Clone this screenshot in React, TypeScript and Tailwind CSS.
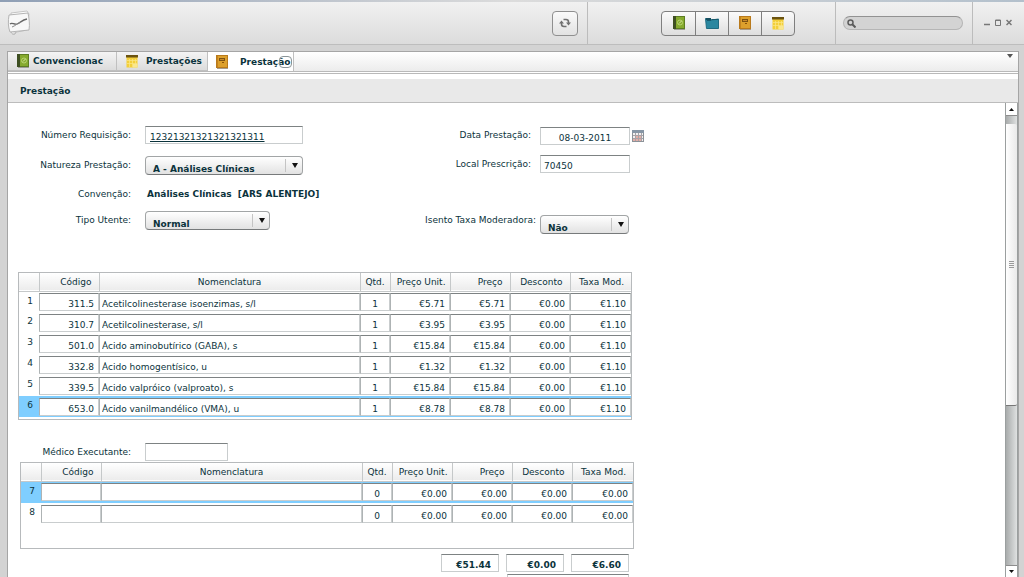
import { useState } from "react"

type Line = {
    n: number
    code: string
    name: string
    qty: string
    unit: string
    price: string
    discount: string
    fee: string
}

const prescribed: Line[] = [
    { n: 1, code: "311.5", name: "Acetilcolinesterase isoenzimas, s/l", qty: "1", unit: "€5.71", price: "€5.71", discount: "€0.00", fee: "€1.10" },
    { n: 2, code: "310.7", name: "Acetilcolinesterase, s/l", qty: "1", unit: "€3.95", price: "€3.95", discount: "€0.00", fee: "€1.10" },
    { n: 3, code: "501.0", name: "Ácido aminobutírico (GABA), s", qty: "1", unit: "€15.84", price: "€15.84", discount: "€0.00", fee: "€1.10" },
    { n: 4, code: "332.8", name: "Ácido homogentísico, u", qty: "1", unit: "€1.32", price: "€1.32", discount: "€0.00", fee: "€1.10" },
    { n: 5, code: "339.5", name: "Ácido valpróico (valproato), s", qty: "1", unit: "€15.84", price: "€15.84", discount: "€0.00", fee: "€1.10" },
    { n: 6, code: "653.0", name: "Ácido vanilmandélico (VMA), u", qty: "1", unit: "€8.78", price: "€8.78", discount: "€0.00", fee: "€1.10" },
]

const extra: Line[] = [
    { n: 7, code: "", name: "", qty: "0", unit: "€0.00", price: "€0.00", discount: "€0.00", fee: "€0.00" },
    { n: 8, code: "", name: "", qty: "0", unit: "€0.00", price: "€0.00", discount: "€0.00", fee: "€0.00" },
]

const field = "block h-[18px] border border-[#c9cdce] border-t-[#7d8283] bg-white pt-1 text-[9px] leading-3 outline-none"

function BookIcon() {
    return (
        <svg width="12" height="14" viewBox="0 0 12 14">
            <rect x="0.5" y="0.5" width="11" height="12" fill="#86aa2e" stroke="#5d7d22" />
            <rect x="0" y="0" width="3" height="13" fill="#3e4f22" />
            <circle cx="7" cy="6.5" r="2.500" fill="none" stroke="#b9d470" />
            <path d="M6 7.5 8.5 5" stroke="#d9eaa5" />
            <path d="M1 13.5h11" stroke="#9d9d95" />
        </svg>
    )
}

function FolderIcon() {
    return (
        <svg width="14" height="12" viewBox="0 0 14 12">
            <path d="M0.5 1.5h5l1 1.5 7-1v9.500h-12z" fill="#2a87a0" stroke="#1f6c82" />
            <path d="M1 1h5v2H1z" fill="#164f60" />
            <path d="M2 3.500h4l1-1h6" fill="none" stroke="#175a6d" />
        </svg>
    )
}

function CardIcon() {
    return (
        <svg width="12" height="14" viewBox="0 0 12 14">
            <rect x="0.5" y="0.5" width="11" height="12" fill="#dda02c" stroke="#b97a1c" />
            <path d="M1.500 1v11" stroke="#c4841f" />
            <rect x="3" y="3" width="6" height="3" fill="#7d5212" />
            <path d="M4 4.500h4" stroke="#c98a2c" />
            <rect x="6" y="7" width="2" height="1" fill="#8a5208" />
            <path d="M1 13.5h11" stroke="#a79c8b" />
        </svg>
    )
}

function CalendarIcon() {
    return (
        <svg width="12" height="13" viewBox="0 0 12 13">
            <rect x="0.500" y="1" width="11" height="11.500" fill="#f3cf3a" />
            <rect x="0" y="0" width="12" height="2.500" fill="#6b5310" />
            <path d="M1 5.500h10M1 8.500h10M3.500 4v8M6.500 4v8M9.500 4v8" stroke="#fbe68a" strokeWidth="0.700" />
            <rect x="7" y="9" width="4.500" height="3.500" fill="#fae78e" />
        </svg>
    )
}

function DateIcon() {
    return (
        <svg width="12" height="12" viewBox="0 0 12 12">
            <rect x="0.500" y="0.500" width="11" height="11" fill="#f2f0f0" stroke="#8c9298" />
            <rect x="0" y="0" width="12" height="3" fill="#8796a5" />
            <path d="M1 5.500h10M1 8.500h10M3.500 3v8M6.500 3v8M9.500 3v8" stroke="#a8a4a8" />
            <path d="M4 7h2M7 7h2M1 10h2M4 10h2M7 10h2" stroke="#d66a5c" />
        </svg>
    )
}

function AppLogo() {
    return (
        <svg width="26" height="26" viewBox="0 0 26 26">
            <path d="M4 3 20 1l2 3-2 16-15 3z" fill="#fdfdfd" stroke="#c4c4c4" />
            <path d="M2 5 21 3c1 5 2 11 1 17L3 22C1 17 1 11 2 5z" fill="#f8f8f8" stroke="#b4b4b4" />
            <path d="M4 22c1 2 2 3 4 2l1-2" fill="#ddd" stroke="#b4b4b4" />
            <path d="M3 14c2-2 4 1 7 0s5-4 10-5" fill="none" stroke="#666" strokeWidth="1.300" />
            <path d="M5 17c3-1 6-4 9-5" fill="none" stroke="#888" />
        </svg>
    )
}

function RefreshIcon() {
    return (
        <svg width="12" height="10" viewBox="0 0 12 10" fill="none" stroke="#707070" strokeWidth="1.600">
            <path d="M4.500 1.500h2.500a2.500 2.500 0 0 1 2.500 2.500v1" />
            <path d="M7.500 8.500H5a2.500 2.500 0 0 1-2.500-2.500V5" />
            <path d="M7 4.500h5L9.500 7.500zM0 5.500h5L2.500 2.500z" fill="#707070" stroke="none" />
        </svg>
    )
}

function Dropdown({ id, options, width }: { id: string; options: string[]; width: string }) {
    return (
        <div className={`relative ${width}`}>
            <select
                id={id}
                className="block h-[19px] w-full appearance-none rounded-[4px] border border-[#a2a5a6] border-b-[#777a7b] bg-linear-to-b from-white to-[#e2e2e2] pt-[6px] pr-6 pl-[7px] text-[9px] leading-3 font-bold outline-none"
            >
                {options.map((o) => (
                    <option key={o}>{o}</option>
                ))}
            </select>
            <span className="pointer-events-none absolute inset-y-[3px] right-0 flex w-[18px] items-center justify-center border-l border-[#c4c4c4]">
                <svg width="6" height="5" viewBox="0 0 6 5">
                    <path d="M0 0h6L3 5z" fill="#111" />
                </svg>
            </span>
        </div>
    )
}

function LinesTable({ label, rows, selected, rowHeight, bottom }: { label: string; rows: Line[]; selected: number; rowHeight: string; bottom: string }) {
    const cell = "block h-[18px] w-full border border-[#c9cdce] border-t-[#7d8283] border-l-[#aeb3b4] bg-white pt-1 text-[9px] leading-3 outline-none"
    return (
        <div className={`w-[614px] border border-[#b7babc] bg-white ${bottom}`}>
            <table aria-label={label} className="w-full table-fixed border-collapse text-[9px] leading-3">
                <colgroup>
                    <col className="w-[20px]" />
                    <col className="w-[60px]" />
                    <col className="w-[261px]" />
                    <col className="w-[30px]" />
                    <col className="w-[60px]" />
                    <col className="w-[60px]" />
                    <col className="w-[60px]" />
                    <col />
                </colgroup>
                <thead>
                    <tr className="h-[18px] border-b border-[#c5c8c9] bg-linear-to-b from-white to-[#ececec]">
                        <th className="p-0" />
                        <th className="border-l border-[#c5c8c9] p-0 pr-[7px] text-right font-normal">Código</th>
                        <th className="border-l border-[#c5c8c9] p-0 text-center font-normal">Nomenclatura</th>
                        <th className="border-l border-[#c5c8c9] p-0 text-center font-normal">Qtd.</th>
                        <th className="border-l border-[#c5c8c9] p-0 pr-1 text-right font-normal whitespace-nowrap">Preço Unit.</th>
                        <th className="border-l border-[#c5c8c9] p-0 pr-[7px] text-right font-normal">Preço</th>
                        <th className="border-l border-[#c5c8c9] p-0 pr-[7px] text-right font-normal">Desconto</th>
                        <th className="border-l border-[#c5c8c9] p-0 pr-[7px] text-right font-normal whitespace-nowrap">Taxa Mod.</th>
                    </tr>
                </thead>
                <tbody>
                    {rows.map((r) => (
                        <tr key={r.n} className={`${rowHeight} ${r.n === selected ? "bg-[#7fceff]" : ""}`}>
                            <td className="p-0 pt-[3px] pr-[6px] text-right align-top">{r.n}</td>
                            <td className="p-0"><input aria-label={`Código ${r.n}`} defaultValue={r.code} className={`${cell} pr-1 text-right`} /></td>
                            <td className="p-0"><input aria-label={`Nomenclatura ${r.n}`} defaultValue={r.name} className={`${cell} pl-[2px]`} /></td>
                            <td className="p-0"><input aria-label={`Qtd. ${r.n}`} defaultValue={r.qty} className={`${cell} text-center`} /></td>
                            <td className="p-0"><input aria-label={`Preço Unit. ${r.n}`} defaultValue={r.unit} className={`${cell} pr-1 text-right`} /></td>
                            <td className="p-0"><input aria-label={`Preço ${r.n}`} defaultValue={r.price} className={`${cell} pr-1 text-right`} /></td>
                            <td className="p-0"><input aria-label={`Desconto ${r.n}`} defaultValue={r.discount} className={`${cell} pr-1 text-right`} /></td>
                            <td className="p-0"><input aria-label={`Taxa Mod. ${r.n}`} defaultValue={r.fee} className={`${cell} pr-1 text-right`} /></td>
                        </tr>
                    ))}
                </tbody>
            </table>
        </div>
    )
}

function Header() {
    const tool = "flex h-full w-[33px] items-center justify-center border-l border-[#7f7f7f] first:border-l-0"
    return (
        <header className="flex h-[43px] shrink-0 border-b border-[#bdbdbd] bg-linear-to-b from-[#f1f1f1] to-[#dcdcdc]">
            <div className="flex flex-1 items-center justify-between border-r border-[#bcbcbc] pr-[9px] pl-[7px]">
                <AppLogo />
                <button aria-label="Atualizar" className="flex h-[25px] w-[26px] items-center justify-center rounded-[4px] border border-[#8f8f8f] bg-linear-to-b from-[#fafafa] to-[#e2e2e2]">
                    <RefreshIcon />
                </button>
            </div>
            <div className="flex w-[248px] items-center justify-end border-r border-[#bcbcbc] pr-10">
                <div className="flex h-[25px] overflow-hidden rounded-[4px] border border-[#7f7f7f] bg-linear-to-b from-[#fbfbfb] to-[#dedede]">
                    <button aria-label="Convenções" className={tool}><BookIcon /></button>
                    <button aria-label="Pastas" className={tool}><FolderIcon /></button>
                    <button aria-label="Prestação" className={tool}><CardIcon /></button>
                    <button aria-label="Prestações" className={tool}><CalendarIcon /></button>
                </div>
            </div>
            <div className="flex w-[137px] items-center border-r border-[#bcbcbc] pr-[9px] pl-[7px]">
                <div className="flex h-[14px] w-full items-center rounded-full border border-[#b5b5b5] border-t-[#929292] bg-[#d3d3d3] pl-[3px]">
                    <svg width="9" height="9" viewBox="0 0 9 9" fill="none" stroke="#5c5c5c">
                        <circle cx="3.500" cy="3.500" r="2.500" strokeWidth="1.500" />
                        <path d="m5.500 5.500 3 3" strokeWidth="2" />
                    </svg>
                    <input aria-label="Pesquisar" className="min-w-0 flex-1 bg-transparent px-1 text-[9px] leading-3 outline-none" />
                </div>
            </div>
            <div className="flex w-[51px] items-center gap-[5px] pb-[2px] pl-[11px]">
                <button aria-label="Minimizar">
                    <svg width="6" height="7" viewBox="0 0 6 7"><path d="M0 5.500h6" stroke="#777" strokeWidth="1.500" /></svg>
                </button>
                <button aria-label="Maximizar">
                    <svg width="6" height="7" viewBox="0 0 6 7"><path d="M.5 1h5v5.500h-5zM0 1.500h6" fill="none" stroke="#777" /></svg>
                </button>
                <button aria-label="Fechar">
                    <svg width="6" height="7" viewBox="0 0 6 7"><path d="m.5 1 5 5M5.500 1l-5 5" stroke="#777" strokeWidth="1.500" /></svg>
                </button>
            </div>
        </header>
    )
}

function Tabs() {
    const [active, setActive] = useState(2)
    const on = "bg-white"
    const off = "border-b border-[#b5b5b5] bg-linear-to-b from-[#f4f4f4] to-[#dcdcdc]"
    return (
        <div className="flex h-[19px] shrink-0 bg-linear-to-b from-white to-[#ececec] text-[9px] font-bold">
            <div role="tablist" className="flex">
                <button role="tab" aria-selected={active === 0} onClick={() => setActive(0)} className={`flex w-[109px] items-center gap-1 border-r border-[#c0c0c0] pl-[9px] ${active === 0 ? on : off}`}>
                    <BookIcon />
                    Convencionac
                </button>
                <button role="tab" aria-selected={active === 1} onClick={() => setActive(1)} className={`flex w-[91px] items-center gap-2 border-r border-[#c0c0c0] pl-[9px] ${active === 1 ? on : off}`}>
                    <CalendarIcon />
                    Prestações
                </button>
                <div className={`relative flex w-[86px] border-r border-[#c0c0c0] ${active === 2 ? on : off}`}>
                    <button role="tab" aria-selected={active === 2} onClick={() => setActive(2)} className="flex items-center gap-3 pl-[8px]">
                        <CardIcon />
                        Prestação
                    </button>
                    <button aria-label="Fechar separador" className="absolute top-1 right-px h-3 w-[13px] rounded-[4px] border border-[#8a9497]" />
                </div>
            </div>
            <button aria-label="Lista de separadores" className="ml-auto self-start p-[5px] pt-[2px]">
                <svg width="6" height="4" viewBox="0 0 6 4"><path d="M0 0h6L3 4z" fill="#555" /></svg>
            </button>
        </div>
    )
}

function Scrollbar() {
    return (
        <div className="flex w-[13px] shrink-0 flex-col border-x border-[#9b9f9f] bg-linear-to-r from-[#a9acac] to-[#dfe1e1]">
            <button aria-label="Subir" className="flex h-[13px] items-center justify-center border-b border-[#8d8d8d] bg-white">
                <svg width="5" height="3" viewBox="0 0 5 3"><path d="M0 3h5L2.500 0z" fill="#111" /></svg>
            </button>
            <div className="flex-1 pt-2">
                <div className="flex h-[64%] items-center justify-center rounded-r-[2px] border-b border-[#777] bg-linear-to-r from-white to-[#eaeaea]">
                    <svg width="5" height="8" viewBox="0 0 5 8"><path d="M0 .5h5M0 2.500h5M0 4.500h5M0 6.500h5" stroke="#9a9a9a" /></svg>
                </div>
            </div>
            <button aria-label="Descer" className="flex h-[12px] items-center justify-center border-t border-[#8d8d8d] bg-white">
                <svg width="5" height="3" viewBox="0 0 5 3"><path d="M0 0h5L2.500 3z" fill="#111" /></svg>
            </button>
        </div>
    )
}

function RequestForm() {
    const label = "h-[18px] text-right leading-[18px] whitespace-nowrap"
    return (
        <form className="flex pt-[23px]">
            <div className="grid w-[380px] grid-cols-[123px_1fr] grid-rows-[30px_29px_26px_20px] items-start gap-x-[14px]">
                <label htmlFor="req" className={label}>Número Requisição:</label>
                <input id="req" defaultValue="12321321321321321311" className={`${field} w-[158px] pl-1 underline`} />
                <label htmlFor="nature" className={label}>Natureza Prestação:</label>
                <Dropdown id="nature" options={["A - Análises Clínicas"]} width="w-[158px]" />
                <span className={label}>Convenção:</span>
                <span className="h-[18px] pl-[2px] leading-[18px] font-bold whitespace-pre">Análises Clínicas  [ARS ALENTEJO]</span>
                <label htmlFor="user" className={label}>Tipo Utente:</label>
                <Dropdown id="user" options={["Normal"]} width="w-[125px]" />
            </div>
            <div className="grid grid-cols-[148px_1fr] grid-rows-[29px_56px_23px] items-start gap-x-1">
                <label htmlFor="date" className={`${label} pr-[5px]`}>Data Prestação:</label>
                <div className="flex items-center gap-[2px] pt-px">
                    <input id="date" defaultValue="08-03-2011" className={`${field} w-[90px] text-center`} />
                    <button type="button" aria-label="Escolher data"><DateIcon /></button>
                </div>
                <label htmlFor="place" className={`${label} pr-[5px]`}>Local Prescrição:</label>
                <input id="place" defaultValue="70450" className={`${field} w-[90px] pl-[3px]`} />
                <label htmlFor="exempt" className={label}>Isento Taxa Moderadora:</label>
                <div className="pt-1">
                    <Dropdown id="exempt" options={["Não", "Sim"]} width="w-[89px]" />
                </div>
            </div>
        </form>
    )
}

export default function App() {
    const total = `${field} w-[58px] pr-[7px] text-right font-bold`
    return (
        <div className="flex h-screen flex-col overflow-hidden bg-[#d3d3d3] font-['DejaVu_Sans',Verdana,sans-serif] text-[9px] leading-3 text-[#0b333c]">
            <div className="h-[2px] shrink-0 bg-linear-to-r from-[#8f9fb5] via-[#dcdcdc] to-[#b3c0cc]" />
            <Header />
            <div className="flex min-h-0 flex-1 pt-[6px] pr-[5px] pl-[7px]">
                <main className="flex min-w-0 flex-1 flex-col border-x border-t border-[#a5a5a5] bg-white">
                    <Tabs />
                    <div className="h-[3px] shrink-0 border-y border-[#b9b9b9] bg-white" />
                    <h1 className="mt-[5px] flex h-6 shrink-0 items-center border-b border-[#bcbcbc] bg-[#e9e9e9] pl-3 font-bold">Prestação</h1>
                    <div className="flex min-h-0 flex-1">
                        <div className="min-w-0 flex-1 overflow-hidden">
                            <RequestForm />
                            <div className="pt-[38px] pl-[10px]">
                                <LinesTable label="Atos prescritos" rows={prescribed} selected={6} rowHeight="h-[21px]" bottom="pb-[2px]" />
                            </div>
                            <div className="flex items-center gap-[14px] pt-[23px]">
                                <label htmlFor="doctor" className="w-[123px] text-right">Médico Executante:</label>
                                <input id="doctor" className={`${field} w-[83px]`} />
                            </div>
                            <div className="w-fit pt-px pl-[12px]">
                                <LinesTable label="Atos adicionais" rows={extra} selected={7} rowHeight="h-[22px]" bottom="pb-[23px]" />
                                <div className="flex flex-col items-end gap-[2px] pt-[5px] pr-[5px]">
                                    <div className="flex gap-[7px]">
                                        <input aria-label="Total preço" readOnly value="€51.44" className={total} />
                                        <input aria-label="Total desconto" readOnly value="€0.00" className={total} />
                                        <input aria-label="Total taxa moderadora" readOnly value="€6.60" className={total} />
                                    </div>
                                    <input aria-label="Total geral" readOnly className={`${field} w-[122px]`} />
                                </div>
                            </div>
                        </div>
                        <Scrollbar />
                    </div>
                </main>
            </div>
        </div>
    )
}
